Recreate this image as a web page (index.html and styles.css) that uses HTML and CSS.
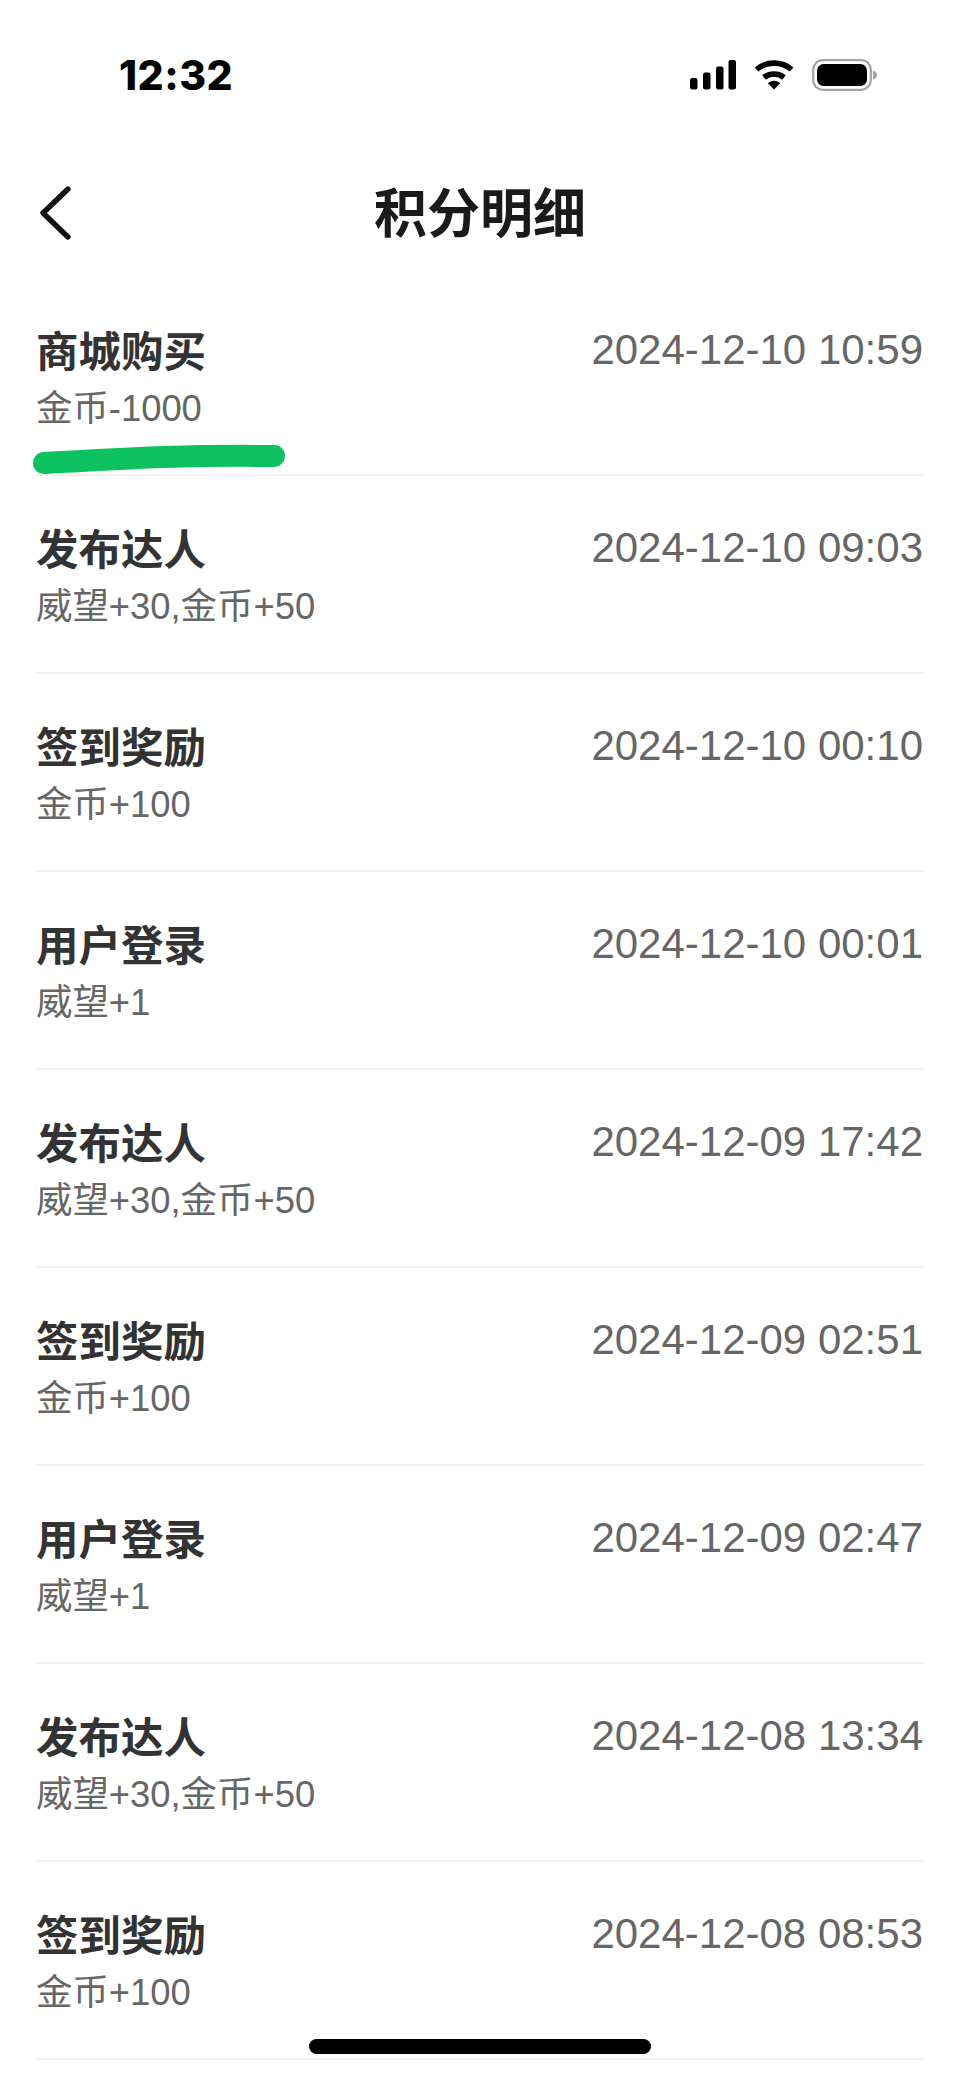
FILE: index.html
```html
<!DOCTYPE html>
<html>

<head>
  <meta charset="utf-8">
  <title>积分明细</title>
  <link rel="stylesheet" href="styles.css">
</head>

<body>
  <div class="page">
    <div class="status-bar">
      <span class="status-time">12:32</span>
      <div class="status-icons">
        <svg class="icon-signal" width="46" height="30" viewBox="0 0 46 30">
          <rect x="0" y="18" width="7.5" height="11.5" rx="2.2"></rect>
          <rect x="13" y="12.5" width="7.5" height="17" rx="2.2"></rect>
          <rect x="26" y="6.5" width="7.5" height="23" rx="2.2"></rect>
          <rect x="38.5" y="0" width="7.5" height="29.5" rx="2.2"></rect>
        </svg>
        <svg class="icon-wifi" width="40" height="30" viewBox="0 0 40 30">
          <path d="M2.5 9.5C12 1 28 1 37.5 9.5" fill="none" stroke="#000" stroke-width="5.6"></path>
          <path d="M10 17.5C15.5 12.8 24.5 12.8 30 17.5" fill="none" stroke="#000" stroke-width="5.6"></path>
          <path d="M13.8 23.2C17.3 19.8 22.7 19.8 26.2 23.2L20 29.6Z"></path>
        </svg>
        <svg class="icon-battery" width="65" height="32" viewBox="0 0 65 32">
          <rect x="1.2" y="1.2" width="57.6" height="29.6" rx="9.5" fill="none" stroke="#a3a3a3" stroke-width="2.2"></rect>
          <rect x="5" y="5" width="50" height="22" rx="6.5"></rect>
          <path d="M61 11.5C63.5 12.3 65 14 65 16C65 18 63.5 19.7 61 20.5Z" fill="#a3a3a3"></path>
        </svg>
      </div>
    </div>

    <div class="nav-bar">
      <svg class="back-icon" width="34" height="56" viewBox="0 0 34 56">
        <path d="M30 4L5 28L30 52" fill="none" stroke="#111" stroke-width="5.4" stroke-linecap="round" stroke-linejoin="round"></path>
      </svg>
      <h1 class="nav-title">积分明细</h1>
    </div>

    <ul class="record-list">
      <li class="record-row">
        <div class="record-info">
          <div class="record-title">商城购买</div>
          <div class="record-detail">金币-1000</div>
        </div>
        <div class="record-time">2024-12-10 10:59</div>
      </li>
      <li class="record-row">
        <div class="record-info">
          <div class="record-title">发布达人</div>
          <div class="record-detail">威望+30,金币+50</div>
        </div>
        <div class="record-time">2024-12-10 09:03</div>
      </li>
      <li class="record-row">
        <div class="record-info">
          <div class="record-title">签到奖励</div>
          <div class="record-detail">金币+100</div>
        </div>
        <div class="record-time">2024-12-10 00:10</div>
      </li>
      <li class="record-row">
        <div class="record-info">
          <div class="record-title">用户登录</div>
          <div class="record-detail">威望+1</div>
        </div>
        <div class="record-time">2024-12-10 00:01</div>
      </li>
      <li class="record-row">
        <div class="record-info">
          <div class="record-title">发布达人</div>
          <div class="record-detail">威望+30,金币+50</div>
        </div>
        <div class="record-time">2024-12-09 17:42</div>
      </li>
      <li class="record-row">
        <div class="record-info">
          <div class="record-title">签到奖励</div>
          <div class="record-detail">金币+100</div>
        </div>
        <div class="record-time">2024-12-09 02:51</div>
      </li>
      <li class="record-row">
        <div class="record-info">
          <div class="record-title">用户登录</div>
          <div class="record-detail">威望+1</div>
        </div>
        <div class="record-time">2024-12-09 02:47</div>
      </li>
      <li class="record-row">
        <div class="record-info">
          <div class="record-title">发布达人</div>
          <div class="record-detail">威望+30,金币+50</div>
        </div>
        <div class="record-time">2024-12-08 13:34</div>
      </li>
      <li class="record-row">
        <div class="record-info">
          <div class="record-title">签到奖励</div>
          <div class="record-detail">金币+100</div>
        </div>
        <div class="record-time">2024-12-08 08:53</div>
      </li>
    </ul>

    <!-- 手写的绿色划线 -->
    <svg class="marker" width="262" height="34" viewBox="0 0 262 34">
      <path d="M16 22C80 19 130 14 246 15" fill="none" stroke="#0cc160" stroke-width="22" stroke-linecap="round"></path>
    </svg>

    <div class="home-bar"></div>
  </div>
</body>

</html>
```

FILE: styles.css
```css
* {
  box-sizing: border-box;
}

body {
  margin: 0;
  background-color: #fff;
  color: #333;
  font-family: 'Liberation Sans', 'Noto Sans CJK SC', sans-serif;
}

.page {
  position: relative;
  width: 960px;
  height: 2079px;
  overflow: hidden;
  background-color: #fff;
}

.status-bar {
  display: flex;
  align-items: center;
  justify-content: space-between;
  height: 150px;
  padding: 0 83px 0 119px;
}

.status-time {
  color: #000;
  font-family: Inter, sans-serif;
  font-size: 41px;
  font-weight: 800;
  letter-spacing: 0.5px;
}

.status-icons {
  display: flex;
  align-items: center;
  gap: 18px;
}

.status-icons svg {
  display: block;
}

.nav-bar {
  position: relative;
  display: flex;
  align-items: center;
  justify-content: center;
  height: 128px;
  padding-bottom: 9px;
}

.back-icon {
  position: absolute;
  top: 35px;
  left: 38px;
}

.nav-title {
  margin: 0;
  color: #1a1a1a;
  font-family: 'Noto Sans CJK SC', sans-serif;
  font-size: 53px;
  font-weight: 700;
}

.record-list {
  margin: 0;
  padding: 0 36px;
  list-style: none;
}

.record-row {
  display: flex;
  justify-content: space-between;
  height: 198px;
  padding-top: 42px;
  border-bottom: 2px solid #f0f0f0;
}

.record-title {
  height: 58px;
  color: #333;
  font-family: 'Noto Sans CJK SC', sans-serif;
  font-size: 42.5px;
  font-weight: 700;
  line-height: 58px;
}

.record-detail {
  margin-top: 9px;
  color: #666;
  font-size: 36.4px;
  line-height: 44px;
}

.record-time {
  margin-top: 2px;
  margin-right: 1px;
  color: #666;
  font-size: 42px;
  line-height: 56px;
}

.marker {
  position: absolute;
  top: 441px;
  left: 28px;
}

.home-bar {
  position: absolute;
  top: 2039px;
  left: 309px;
  width: 342px;
  height: 15px;
  border-radius: 8px;
  background-color: #000;
}
```
